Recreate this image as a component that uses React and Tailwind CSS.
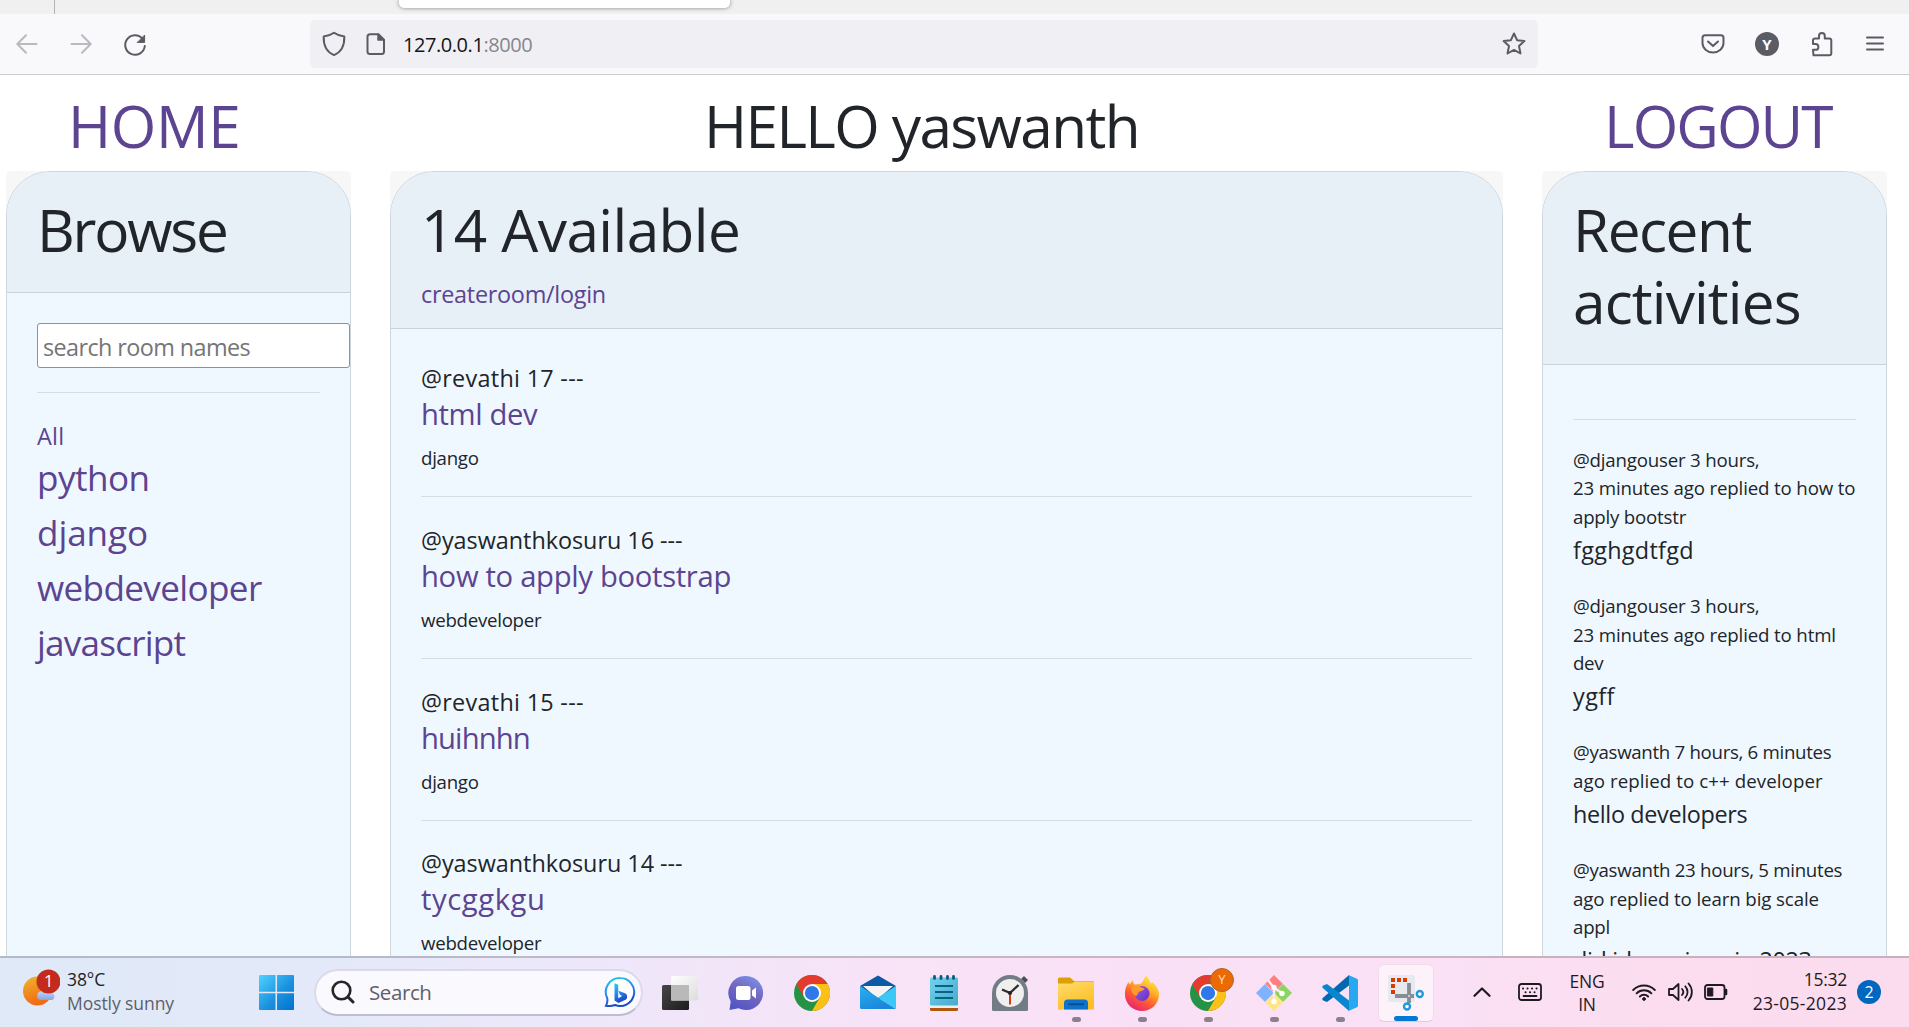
import React from "react";

const topics = [
  { name: "python", cls: "tracking-[-0.015em]" },
  { name: "django", cls: "tracking-[-0.002em]" },
  { name: "webdeveloper", cls: "tracking-[-0.018em]" },
  { name: "javascript", cls: "tracking-[-0.0225em]" },
];

const rooms = [
  { host: "@revathi 17 ---", hostCls: "tracking-[0.0126em]", name: "html dev", nameCls: "tracking-[-0.013em]", topic: "django" },
  { host: "@yaswanthkosuru 16 ---", hostCls: "tracking-[-0.0014em]", name: "how to apply bootstrap", nameCls: "tracking-[-0.011em]", topic: "webdeveloper" },
  { host: "@revathi 15 ---", hostCls: "tracking-[0.0126em]", name: "huihnhn", nameCls: "tracking-[-0.03em]", topic: "django" },
  { host: "@yaswanthkosuru 14 ---", hostCls: "tracking-[-0.0014em]", name: "tycggkgu", nameCls: "tracking-[0.019em]", topic: "webdeveloper" },
];

const activities = [
  {
    lines: [
      ["@djangouser 3 hours,", "tracking-[-0.011em]"],
      ["23 minutes ago replied to how to", "tracking-[-0.008em]"],
      ["apply bootstr", "tracking-[-0.012em]"],
    ],
    message: "fgghgdtfgd",
    cls: "tracking-[0.013em]",
  },
  {
    lines: [
      ["@djangouser 3 hours,", "tracking-[-0.011em]"],
      ["23 minutes ago replied to html", "tracking-[-0.008em]"],
      ["dev", "tracking-[-0.018em]"],
    ],
    message: "ygff",
    cls: "tracking-[0.018em]",
  },
  {
    lines: [
      ["@yaswanth 7 hours, 6 minutes", "tracking-[-0.017em]"],
      ["ago replied to c++ developer", "tracking-[0.004em]"],
    ],
    message: "hello developers",
    cls: "tracking-[-0.015em]",
  },
  {
    lines: [
      ["@yaswanth 23 hours, 5 minutes", "tracking-[-0.016em]"],
      ["ago replied to learn big scale", "tracking-[-0.006em]"],
      ["appl", "tracking-[-0.012em]"],
    ],
    message: "did ido revison in 2023",
    cls: "tracking-[-0.015em]",
  },
];

function Stroke({ w, h, box, sw = 2, color = "#5b5b66", className = "", children }) {
  return (
    <svg width={w} height={h} viewBox={box || `0 0 ${w} ${h}`} fill="none" stroke={color} strokeWidth={sw} strokeLinecap="round" strokeLinejoin="round" className={`shrink-0 ${className}`}>
      {children}
    </svg>
  );
}

function TabStrip() {
  return (
    <div className="flex h-[14px] shrink-0 bg-[#f0f0f0]">
      <div className="ml-[54px] h-full w-px bg-[#b4b4b4]" />
      <div className="ml-[344px] h-2 w-[331px] rounded-b-[5px] bg-white shadow-[0_0_4px_rgba(0,0,0,0.45)]" />
    </div>
  );
}

function NavBar() {
  return (
    <div className="flex h-[61px] shrink-0 items-center border-b border-[#cccccf] bg-[#f9f9fb]">
      <Stroke w={22} h={22} color="#b9b9c0" className="ml-[16px]">
        <path d="M20.5 11H1.5M10 2.2L1.3 11L10 19.8" />
      </Stroke>
      <Stroke w={22} h={22} color="#b9b9c0" className="ml-[32px]">
        <path d="M1.5 11h19M12 2.2L20.7 11L12 19.8" />
      </Stroke>
      <Stroke w={24} h={24} className="ml-[31px] mt-[2px]">
        <path d="M19.5 5.600A9.800 9.800 0 1 0 21.800 13" />
        <path d="M21.600 2.400v7h-7z" fill="#5b5b66" strokeWidth="1" />
      </Stroke>
      <div className="ml-[163px] flex h-12 w-[1228px] items-center rounded-[5px] bg-[#f0f0f4]">
        <Stroke w={24} h={26} className="ml-[12px]">
          <path d="M12 1.800C9 4 5.500 5 1.700 5.400C1.400 13 3.500 20.500 12 24.200C20.500 20.500 22.600 13 22.300 5.400C18.500 5 15 4 12 1.800z" />
        </Stroke>
        <Stroke w={20} h={24} className="ml-[20px]">
          <path d="M4 2.200h8.500L18 7.700V19.500a2.500 2.500 0 0 1-2.500 2.500H4a2.500 2.500 0 0 1-2.500-2.500V4.700A2.500 2.500 0 0 1 4 2.200z" />
          <path d="M12 2.200V8h6z" fill="#5b5b66" strokeWidth="1.500" />
        </Stroke>
        <span className="ml-[17px] whitespace-pre pt-[2px] text-[20px] tracking-[-0.022em] text-[#15141a]">
          127.0.0.1<span className="text-[#86868c]">:8000</span>
        </span>
        <Stroke w={26} h={26} className="ml-auto mr-[11px]">
          <path d="M13 2.500l3.100 6.700 7.300.9-5.400 5 1.500 7.400L13 18.900l-6.500 3.600L8 15.100l-5.400-5 7.300-.9z" />
        </Stroke>
      </div>
      <Stroke w={24} h={22} className="ml-[163px]">
        <path d="M4 2.200h16a2.500 2.500 0 0 1 2.500 2.500V10a10.500 9.500 0 0 1-21 0V4.700A2.500 2.500 0 0 1 4 2.200zM7 8.500l5 4.600 5-4.600" />
      </Stroke>
      <div className="ml-[30px] flex size-6 items-center justify-center rounded-full bg-[#5b5b66] text-[15px] font-bold leading-none text-white">Y</div>
      <Stroke w={24} h={26} className="ml-[31px]">
        <path d="M3.500 24.300h15.800a2 2 0 0 0 2-2V9.600a2 2 0 0 0-2-2H14.800V5a2.900 2.900 0 0 0-5.800 0V7.600H5a2 2 0 0 0-2 2V13h2.500a2.900 2.900 0 0 1 0 5.800H3z" />
      </Stroke>
      <Stroke w={20} h={18} className="ml-[31px]">
        <path d="M2 2.500h16M2 8.500h16M2 14.500h16" />
      </Stroke>
    </div>
  );
}

function Card({ header, headerCls, bodyCls, children }) {
  return (
    <section className="h-[900px] rounded-t-[5px] bg-[#f7f7f7]">
      <div className="h-full overflow-hidden rounded-t-[44px] border border-[#cfd7de] bg-[#f0f8ff]">
        <div className={`border-b border-[#c9d1d9] bg-[#e7eff7] px-[30px] ${headerCls}`}>{header}</div>
        <div className={`px-[30px] ${bodyCls}`}>{children}</div>
      </div>
    </section>
  );
}

const h1 = "text-[58.5px] leading-[72px] whitespace-nowrap";
const link = "text-[#5c4491]";
const rule = "h-px bg-[#d5dce4]";

function Page() {
  return (
    <main className="h-[881px] shrink-0 overflow-hidden bg-white pt-[14px] text-[#212529]">
      <div className="ml-[6px] grid h-[82px] grid-cols-[345px_1113px_345px] gap-x-[39px]">
        <h1 className={`${h1} ${link} pl-[62px] tracking-[-0.005em]`}>HOME</h1>
        <h1 className={`${h1} pl-[314px] tracking-[-0.0275em]`}>HELLO yaswanth</h1>
        <h1 className={`${h1} ${link} pl-[62px] tracking-[-0.032em]`}>LOGOUT</h1>
      </div>
      <div className="ml-[6px] grid grid-cols-[345px_1113px_345px] gap-x-[39px]">
        <Card headerCls="h-[121px] pt-[20.500px]" bodyCls="pt-[30px]" header={<h1 className={`${h1} tracking-[-0.038em]`}>Browse</h1>}>
          <div className="flex h-[45px] w-[313px] items-center rounded-[3px] border border-[#8f8f9d] bg-white pl-[5px] pt-[5px] text-[23.4px] tracking-[-0.0254em] text-[#757575]">
            search room names
          </div>
          <div className={`${rule} mt-[24px]`} />
          <div className={`${link} mt-[25px] text-[23.4px] leading-[36px] tracking-[0.01em]`}>All</div>
          <ul className="mt-[-4.500px]">
            {topics.map((t) => (
              <li key={t.name} className={`${link} ${t.cls} text-[35.1px] leading-[55px]`}>{t.name}</li>
            ))}
          </ul>
        </Card>
        <Card
          headerCls="h-[157px] pt-[20.500px]"
          bodyCls="pt-[31.400px]"
          header={
            <>
              <h1 className={`${h1} tracking-[-0.01em]`}>14 Available</h1>
              <div className={`${link} mt-[11px] text-[23.4px] leading-[36px] tracking-[-0.0115em]`}>createroom/login</div>
            </>
          }
        >
          {rooms.map((r) => (
            <article key={r.host}>
              <div className={`text-[23.4px] leading-[36px] ${r.hostCls}`}>{r.host}</div>
              <div className={`${link} text-[29.25px] leading-[36px] ${r.nameCls}`}>{r.name}</div>
              <div className="mt-[11px] text-[18.7px] leading-[29px] tracking-[-0.015em]">{r.topic}</div>
              <div className={`${rule} mb-[24.600px] mt-[24px]`} />
            </article>
          ))}
        </Card>
        <Card
          headerCls="h-[193px] pt-[20.500px]"
          bodyCls="pt-[54px]"
          header={
            <h1 className={h1}>
              <span className="block tracking-[-0.025em]">Recent</span>
              <span className="block tracking-[-0.015em]">activities</span>
            </h1>
          }
        >
          <div className={`${rule} mb-[25.500px]`} />
          {activities.map((a, i) => (
            <article key={i} className="mb-6 whitespace-nowrap">
              <div className="text-[18.7px] leading-[28.8px]">
                {a.lines.map(([text, cls]) => <div key={text} className={cls}>{text}</div>)}
              </div>
              <div className={`text-[23.4px] leading-[36px] ${a.cls}`}>{a.message}</div>
            </article>
          ))}
        </Card>
      </div>
    </main>
  );
}

function Weather() {
  return (
    <svg width="38" height="46" viewBox="0 0 38 46" className="-mt-[2px] ml-[22px] shrink-0">
      <defs>
        <linearGradient id="sun" x1="0" y1="0" x2="0.300" y2="1"><stop stopColor="#f0b52f" /><stop offset="1" stopColor="#f26a12" /></linearGradient>
        <linearGradient id="cloud" x1="0" y1="0" x2="0" y2="1"><stop stopColor="#cfe0fb" /><stop offset="1" stopColor="#86a5e0" /></linearGradient>
      </defs>
      <circle cx="15.500" cy="22" r="14.500" fill="url(#sun)" />
      <path d="M18 31a4.500 4.500 0 0 1 .5-8.500 6 6 0 0 1 10.500 1.200A3.800 3.800 0 0 1 30 31z" fill="url(#cloud)" />
      <circle cx="26.500" cy="12.500" r="12" fill="#c42b1c" />
      <text x="26.800" y="18.200" fontSize="16.500" textAnchor="middle" fill="#fff" fontFamily="Open Sans">1</text>
    </svg>
  );
}

function Chrome() {
  return (
    <svg width="36" height="36" viewBox="0 0 48 48">
      <circle cx="24" cy="24" r="24" fill="#269245" />
      <path d="M24 24L3.200 12A24 24 0 0 1 44.800 12z" fill="#e33b2e" />
      <path d="M13.600 30L3.200 12H24z" fill="#e33b2e" />
      <path d="M24 12h20.800A24 24 0 0 1 24 48L34.400 30z" fill="#fbc116" />
      <circle cx="24" cy="24" r="12" fill="#fff" />
      <circle cx="24" cy="24" r="9.500" fill="#2f78ea" />
    </svg>
  );
}

const icons = {
  taskview: (
    <svg width="36" height="36" viewBox="0 0 36 36">
      <defs>
        <linearGradient id="tv1" x1="0" y1="0" x2="1" y2="1"><stop stopColor="#474747" /><stop offset="1" stopColor="#1c1c1c" /></linearGradient>
        <linearGradient id="tv2" x1="0" y1="0" x2="1" y2="1"><stop stopColor="#fff" /><stop offset="1" stopColor="#dcdcdc" /></linearGradient>
      </defs>
      <rect y="10" width="27" height="25" rx="1.500" fill="url(#tv1)" />
      <rect x="9" y="1" width="27" height="24.500" rx="1.500" fill="url(#tv2)" />
      <rect x="9" y="10" width="18" height="15.500" fill="#b9b9b9" />
    </svg>
  ),
  chat: (
    <svg width="36" height="36" viewBox="0 0 36 36">
      <defs><linearGradient id="ch" x1="0.800" y1="0" x2="0.300" y2="1"><stop stopColor="#7b93ec" /><stop offset="0.450" stopColor="#7568bf" /><stop offset="1" stopColor="#5155c6" /></linearGradient></defs>
      <path d="M18 1a17 17 0 1 1-7.500 32.200L1.500 35l1.200-8.500A17 17 0 0 1 18 1z" fill="url(#ch)" />
      <rect x="8" y="11" width="14.500" height="14" rx="2.500" fill="#fff" />
      <path d="M24 15.500l4-3v11l-4-3z" fill="#fff" />
    </svg>
  ),
  chrome: <Chrome />,
  mail: (
    <svg width="36" height="36" viewBox="0 0 36 36">
      <defs><linearGradient id="ml" x1="0" y1="0" x2="0.500" y2="1"><stop stopColor="#2ab1ef" /><stop offset="1" stopColor="#1a86dc" /></linearGradient></defs>
      <path d="M0 11L18 0.500 36 11 18 25z" fill="#0c59a4" />
      <path d="M3 11h30L18 24z" fill="#f4f4f4" />
      <path d="M0 11l36 23H1.500A1.500 1.500 0 0 1 0 32.500z" fill="url(#ml)" />
      <path d="M36 11L18 22.500 36 34z" fill="#3cc8f6" />
    </svg>
  ),
  notes: (
    <svg width="28" height="36" viewBox="0 0 28 36">
      <defs><linearGradient id="nt" x1="0" y1="0" x2="1" y2="1"><stop stopColor="#72d3ee" /><stop offset="1" stopColor="#43abcb" /></linearGradient></defs>
      <rect y="26" width="28" height="10" rx="1.500" fill="#b1560f" />
      <rect y="26" width="28" height="7" fill="#eee" />
      <rect y="2.500" width="28" height="28" rx="1.500" fill="url(#nt)" />
      <path d="M5 11h18M5 17h18M5 23h18" stroke="#0b6285" strokeWidth="2" />
      <path d="M4.500 1.500v2M11 1.500v2M17.500 1.500v2M23.500 1.500v2" stroke="#11597a" strokeWidth="2.800" strokeLinecap="round" />
    </svg>
  ),
  clock: (
    <svg width="36" height="36" viewBox="0 0 36 36">
      <path d="M29 4l3-3 4 4-3 3z" fill="#4c4f54" />
      <path d="M0 18a18 18 0 0 1 36 0v16.500a1.500 1.500 0 0 1-1.500 1.500H1.500A1.500 1.500 0 0 1 0 34.500z" fill="#737c86" />
      <circle cx="18" cy="18" r="14" fill="#efefef" />
      <path d="M18 18v11.500" stroke="#d83b12" strokeWidth="2" />
      <path d="M18 18l8.500-8M18 18l-8-3.500" stroke="#2d2d2d" strokeWidth="2.400" />
      <circle cx="18" cy="18" r="2" fill="#222" />
    </svg>
  ),
  explorer: (
    <svg width="36" height="36" viewBox="0 0 36 36">
      <defs><linearGradient id="ex" x1="0" y1="0" x2="0.500" y2="1"><stop stopColor="#ffdc6c" /><stop offset="1" stopColor="#fdbe25" /></linearGradient></defs>
      <path d="M0 4a1.500 1.500 0 0 1 1.500-1.500H12l4 3.500h18.500A1.500 1.500 0 0 1 36 7.500V15H0z" fill="#dd9e06" />
      <path d="M0 8.500h14l3-2h17.500A1.500 1.500 0 0 1 36 8v26.500H0z" fill="url(#ex)" />
      <path d="M6 34.500V28a3.500 3.500 0 0 1 3.500-3.500h17A3.500 3.500 0 0 1 30 28v6.500z" fill="#0b74ca" />
      <path d="M11 29.200h14" stroke="#0a4c8c" strokeWidth="2" strokeLinecap="round" />
    </svg>
  ),
  firefox: (
    <svg width="36" height="36" viewBox="0 0 36 36">
      <defs>
        <linearGradient id="ff" x1="0.800" y1="0" x2="0.250" y2="1"><stop stopColor="#fff04a" /><stop offset="0.350" stopColor="#ffb327" /><stop offset="0.650" stopColor="#ff5a33" /><stop offset="1" stopColor="#e71f78" /></linearGradient>
        <linearGradient id="fp" x1="0" y1="0" x2="1" y2="1"><stop stopColor="#a259f5" /><stop offset="1" stopColor="#5c34b4" /></linearGradient>
      </defs>
      <path d="M22 0.500c3 3 4 5.500 4.500 8l1.500-1.500c5 4 7 8.500 7 12.500a17 16.500 0 0 1-34 0C1 13.500 2.500 10 4.500 7l1 2.500 3.500-4.500c0 2 .5 3.500 1.500 4.500l6-.5c2.500-1.500 3-5 5.500-8.500z" fill="url(#ff)" />
      <circle cx="18" cy="18.500" r="7.500" fill="url(#fp)" />
      <path d="M7 12c3-2.500 7-2.500 9.500 0 1.500 1.200 3 1.200 4 1.500-1 2.500-4 2-5.500 3.500-2 2-1 3-3 4-3-1-5-5-5-9z" fill="#ff9a2e" />
    </svg>
  ),
  chromeUser: (
    <div className="relative">
      <Chrome />
      <div className="absolute -right-2 -top-[7px] flex size-6 items-center justify-center rounded-full border border-[#a9683a] bg-[#ec6a03] text-[13px] leading-none text-[#ffdcbf]">Y</div>
    </div>
  ),
  git: (
    <svg width="36" height="36" viewBox="0 0 36 36">
      <path d="M18 0l8.800 8.800L18 17.600 9.200 8.800z" fill="#ff8080" />
      <path d="M9 9l8.800 9L9 27 0 18z" fill="#80b3ff" />
      <path d="M27 9l9 9-9 9-9-9z" fill="#8dd35f" />
      <path d="M18 18.500l8.800 8.700L18 36l-8.800-8.800z" fill="#ffe680" />
      <path d="M12 5l6 8v14M18 13l8 5" stroke="#fbeaf8" strokeWidth="2.400" fill="none" />
      <circle cx="18" cy="12.500" r="2.700" fill="#fff" /><circle cx="26" cy="18.500" r="2.700" fill="#fff" /><circle cx="18" cy="26.500" r="2.700" fill="#fff" />
    </svg>
  ),
  vscode: (
    <svg width="36" height="36" viewBox="0 0 36 36">
      <path d="M27 0v10.500L5 27 1.200 25.400a1.500 1.500 0 0 1-.4-2.500z" fill="#0069b0" />
      <path d="M27 36V25.500L5 9 1.200 10.600a1.500 1.500 0 0 0-.4 2.500z" fill="#0a86cf" />
      <path d="M26.500 0L35 3.700a1.800 1.800 0 0 1 1 1.600v25.400a1.800 1.800 0 0 1-1 1.600L26.500 36c.4-.4.5-1 .5-2V2c0-1-.1-1.600-.5-2z" fill="#28a8f0" />
    </svg>
  ),
  snip: (
    <svg width="36" height="36" viewBox="0 0 36 36">
      <rect width="27" height="27" rx="2" fill="#e6e9ee" />
      <path d="M3 3h4v4H3zM9 3h4v4H9zM15 3h4v4h-4zM3 9h4v4H3zM3 15h4v4H3z" fill="#d83b01" />
      <path d="M21 8v20M7 21h19" stroke="#868d95" strokeWidth="3.800" fill="none" />
      <circle cx="19" cy="31.500" r="3" stroke="#1e9be0" strokeWidth="2.400" fill="#fff" />
      <circle cx="31.800" cy="19" r="3" stroke="#1e9be0" strokeWidth="2.400" fill="#fff" />
      <circle cx="21" cy="21" r="1" fill="#e0e0e0" />
    </svg>
  ),
};

const apps = [
  ["taskview"], ["chat"], ["chrome"], ["mail"], ["notes"], ["clock"],
  ["explorer", "open"], ["firefox", "open"], ["chromeUser", "open"], ["git", "open"], ["vscode", "open"], ["snip", "active"],
];

function AppButton({ name, state }) {
  return (
    <div className="flex h-full w-[66px] items-center justify-center">
      <div className={`relative flex h-[58px] w-[56px] items-center justify-center rounded-md ${state === "active" ? "border border-[#f0dcea] border-b-[#e0cbd9] bg-[#fdf1fa]" : ""}`}>
        {icons[name]}
        {state === "open" && <div className="absolute bottom-0 h-[5px] w-[9px] rounded-full bg-[#8c808c]" />}
        {state === "active" && <div className="absolute bottom-0 h-[5px] w-6 rounded-full bg-[#0078d4]" />}
      </div>
    </div>
  );
}

function Taskbar() {
  const ink = "#1f1a1f";
  return (
    <footer className="flex h-[71px] shrink-0 items-center border-t-2 border-black/20 bg-[linear-gradient(90deg,#dfe9f8_0%,#e4e9f9_18%,#ede7fa_30%,#f7e3f7_45%,#fae0f6_60%,#fae1f5_75%,#fcdcef_88%,#fbdcef_100%)] bg-clip-border bg-origin-border">
      <Weather />
      <div className="-mt-[4px] ml-[7px] w-[120px] whitespace-nowrap text-[17.5px] leading-6 tracking-[-0.004em] text-[#1f1f24]">
        <div>38°C</div>
        <div className="text-[#5d5f69]">Mostly sunny</div>
      </div>
      <svg width="35" height="35" viewBox="0 0 35 35" className="ml-[72px] shrink-0">
        <defs><linearGradient id="win" gradientUnits="userSpaceOnUse" x1="0" y1="0" x2="35" y2="35"><stop stopColor="#4fd3ff" /><stop offset="0.550" stopColor="#1b93df" /><stop offset="1" stopColor="#0072cf" /></linearGradient></defs>
        <path d="M1 0h15.500v16.800H0V1a1 1 0 0 1 1-1zM18 0h16a1 1 0 0 1 1 1v15.800H18zM0 18.200h16.500V35H1a1 1 0 0 1-1-1zM18 18.200h17V34a1 1 0 0 1-1 1H18z" fill="url(#win)" />
      </svg>
      <div className="-mt-px ml-[20px] mr-[4px] flex h-[47px] w-[329px] items-center rounded-full border-2 border-[#dcd9ec] border-b-[#bfbccf] bg-[#f9f9fe]">
        <svg width="24" height="24" viewBox="0 0 24 24" fill="none" stroke="#262626" strokeWidth="2.600" strokeLinecap="round" className="ml-[15px]">
          <circle cx="10.500" cy="10.500" r="8.800" /><path d="M17 17l5 5" strokeWidth="3" />
        </svg>
        <span className="ml-[14px] text-[20.5px] tracking-[-0.02em] text-[#5f6068]">Search</span>
        <svg width="32" height="32" viewBox="0 0 32 32" className="ml-auto mr-[5px]">
          <defs><linearGradient id="bing" x1="0" y1="0" x2="0.300" y2="1"><stop stopColor="#1fd0ea" /><stop offset="0.500" stopColor="#2b8cf0" /><stop offset="1" stopColor="#1b48c4" /></linearGradient></defs>
          <path d="M16.500 2a14 14 0 1 1-5.500 27c-3 1.200-6 1.200-9 .8 1.400-2.500 1.600-5 1.300-7.500A14 14 0 0 1 16.500 2z" fill="#fff" stroke="url(#bing)" strokeWidth="2" />
          <path d="M10.500 7.200l3.700 1.500v13.500l4-2.300-2.300-1.200-1.500-4 7.300 2.800a4 4 0 0 1 .3 6l-7.500 3.500-4-2.500z" fill="url(#bing)" />
        </svg>
      </div>
      {apps.map(([n, s]) => <AppButton key={n} name={n} state={s} />)}
      <Stroke w={18} h={10} color={ink} sw={2.2} className="-mt-px ml-[34px]"><path d="M1.500 8.800L9 1.500l7.500 7.300" /></Stroke>
      <Stroke w={24} h={18} color={ink} sw={1.8} className="-mt-px ml-[27px]">
        <rect x="1" y="1" width="22" height="16" rx="2.500" />
        <path d="M5.500 13h13" />
        <path d="M5 5.500h.1M9.500 5.500h.1M14 5.500h.1M18.500 5.500h.1M7.500 9.300h.1M12 9.300h.1M16.500 9.300h.1" strokeWidth="2" />
      </Stroke>
      <div className="ml-[18px] w-[54px] pt-px text-center text-[17.5px] leading-[23px] tracking-[-0.01em] text-[#1f1a1f]">
        <div>ENG</div>
        <div>IN</div>
      </div>
      <Stroke w={24} h={18} color={ink} sw={1.9} className="-mt-px ml-[18px]">
        <path d="M1.200 7a15.300 15.300 0 0 1 21.600 0M4.600 10.300a10.500 10.500 0 0 1 14.800 0M7.900 13.500a5.800 5.800 0 0 1 8.200 0" />
        <circle cx="12" cy="16" r="1.400" fill={ink} strokeWidth="1" />
      </Stroke>
      <Stroke w={25} h={20} color={ink} sw={1.8} className="-mt-px ml-[12px]">
        <path d="M1 7h4l5.500-5v16L5 13H1zM14 7a4.500 4.500 0 0 1 0 6M17.300 4.300a8.300 8.300 0 0 1 0 11.400M20.500 1.500a12.500 12.500 0 0 1 0 17" />
      </Stroke>
      <Stroke w={24} h={16} color={ink} sw={1.8} className="-mt-px ml-[11px]">
        <rect x="1" y="1" width="19.500" height="14" rx="2.500" />
        <path d="M3.800 4h5v8h-5z" fill={ink} strokeWidth="1" />
        <path d="M22 6v4" strokeWidth="2.600" />
      </Stroke>
      <div className="-mt-[4px] w-[119px] text-right text-[17.5px] leading-6 text-[#1f1a1f]">
        <div className="tracking-[-0.015em]">15:32</div>
        <div className="tracking-[0.017em]">23-05-2023</div>
      </div>
      <div className="-mt-[2px] ml-[10px] flex size-6 items-center justify-center rounded-full bg-[#0067c0] text-[16px] leading-none text-white">2</div>
    </footer>
  );
}

export default function App() {
  return (
    <div className="flex h-[1027px] w-[1909px] flex-col overflow-hidden bg-white font-['Open_Sans','Noto_Sans',sans-serif]">
      <TabStrip />
      <NavBar />
      <Page />
      <Taskbar />
    </div>
  );
}
